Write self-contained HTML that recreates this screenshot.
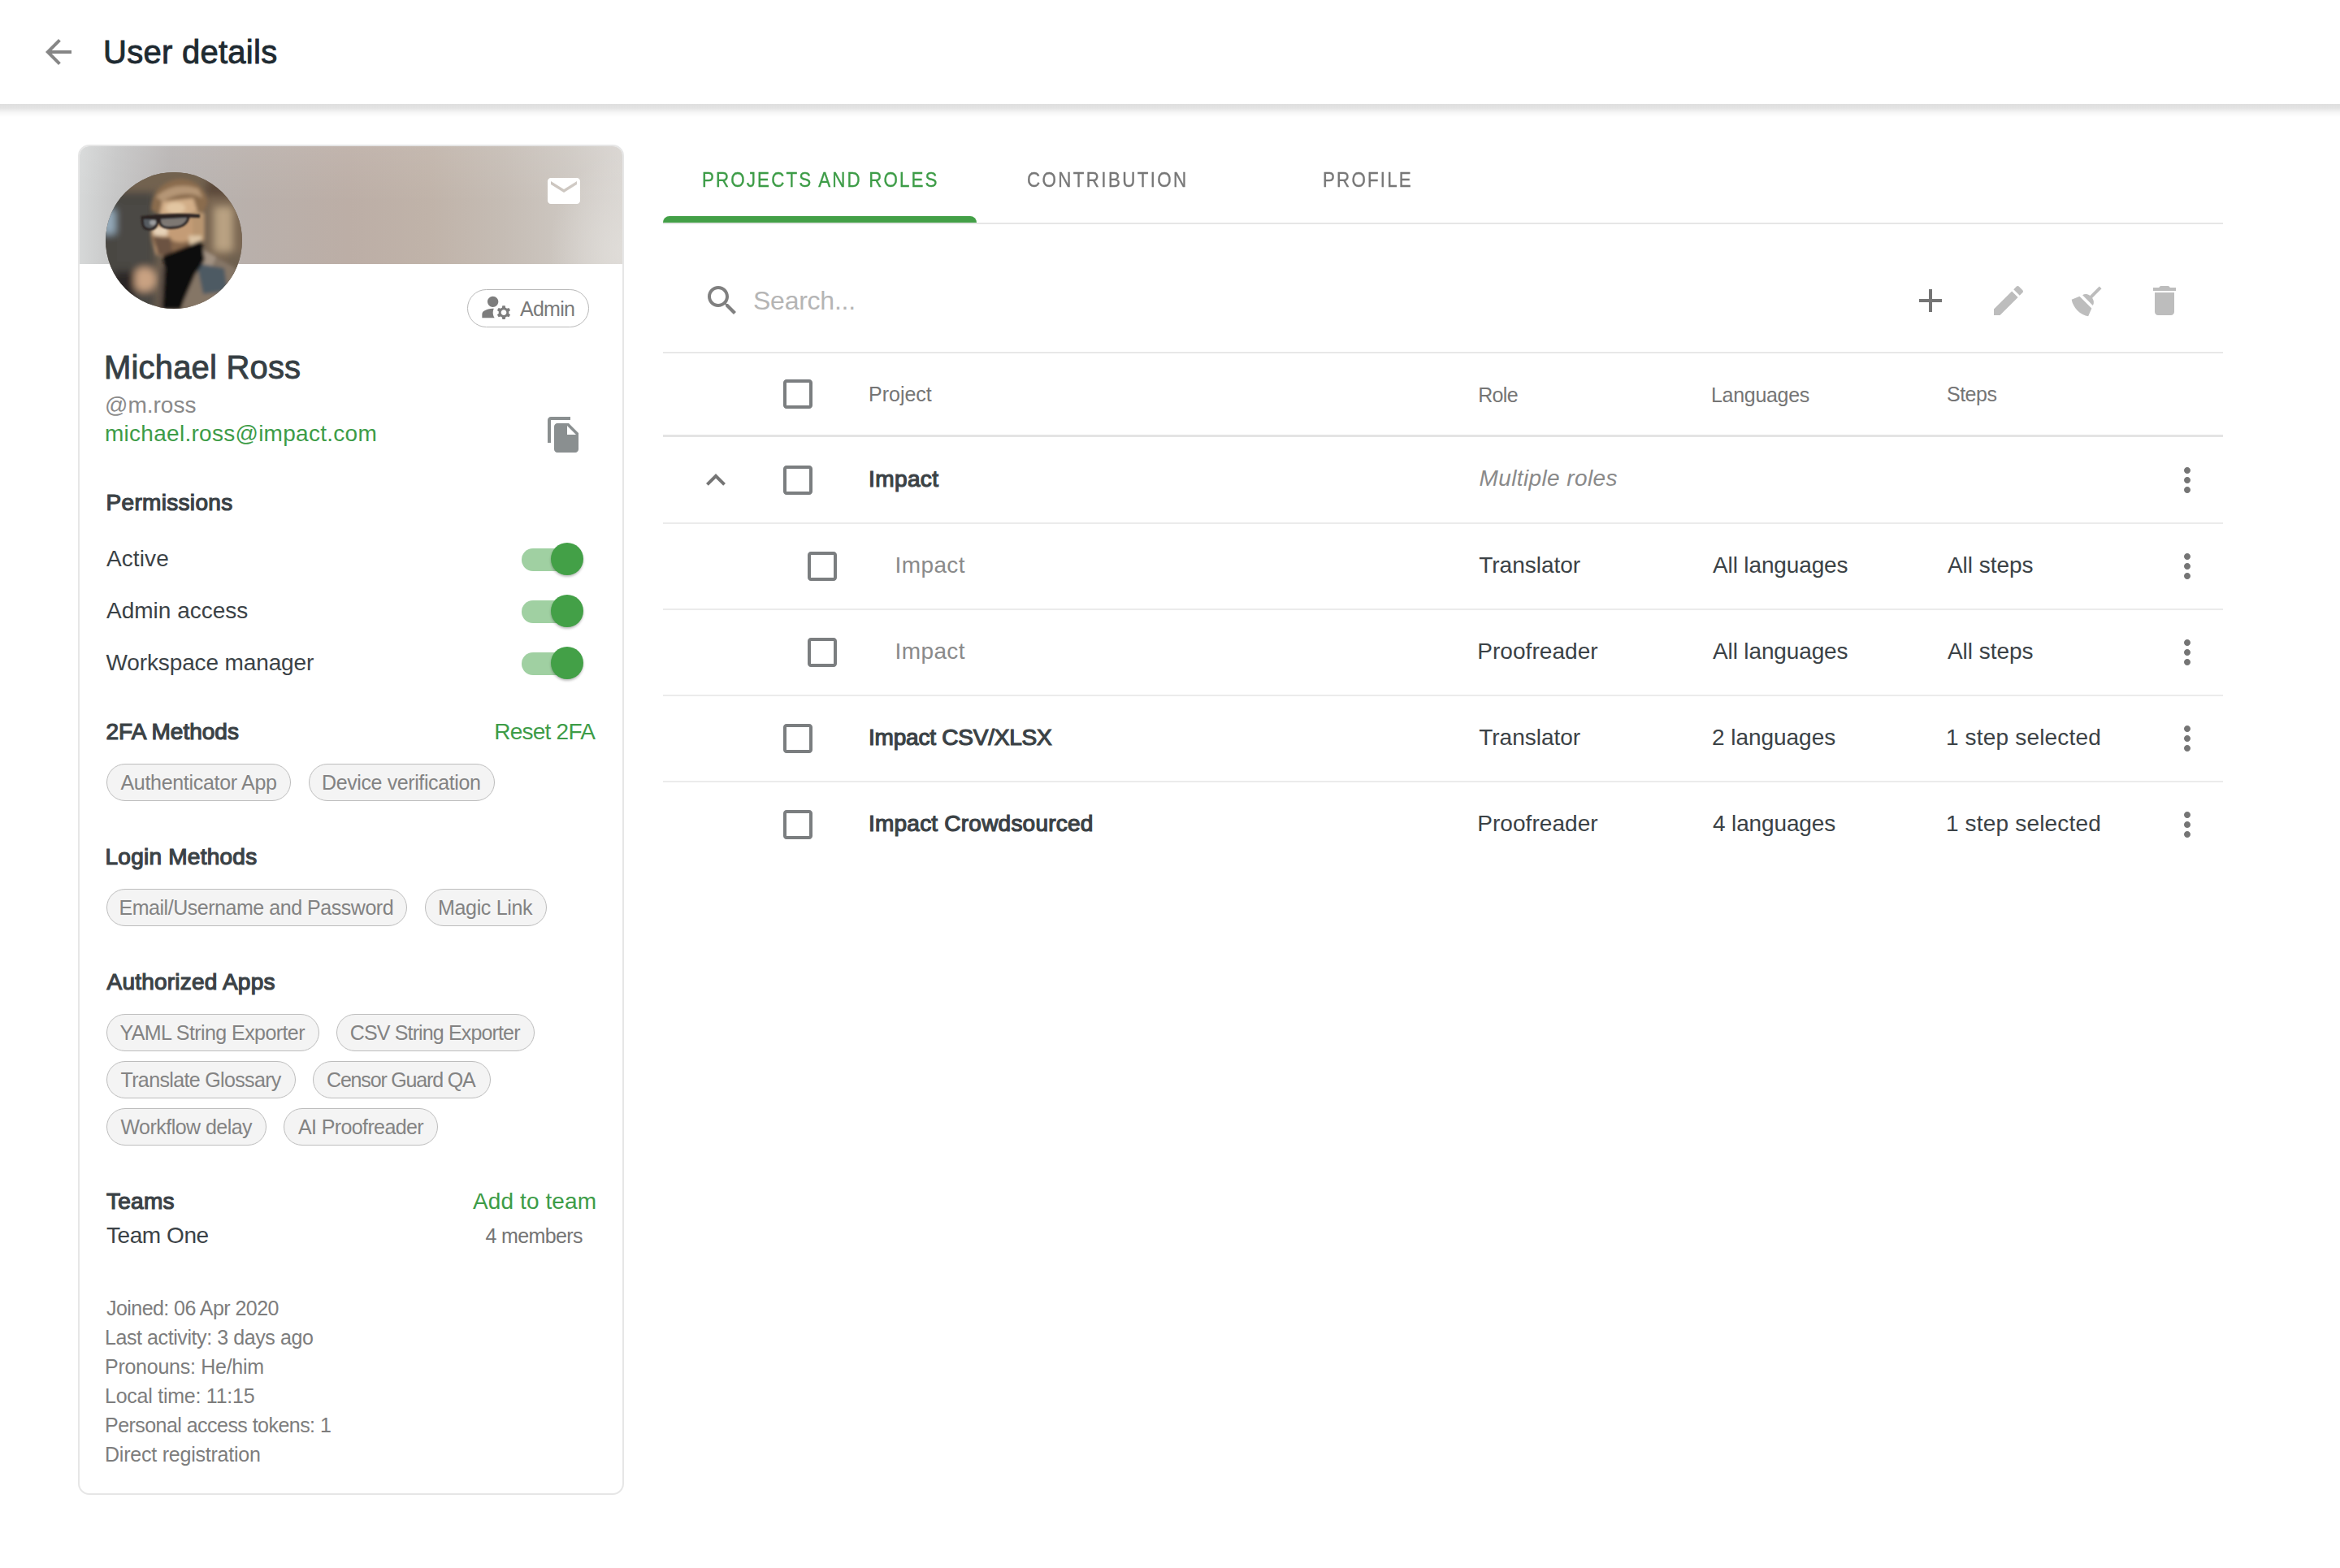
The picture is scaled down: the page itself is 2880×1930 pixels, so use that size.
<!DOCTYPE html>
<html><head><meta charset="utf-8">
<style>
html,body{margin:0;padding:0;background:#fff;}
body{width:2880px;height:1930px;position:relative;overflow:hidden;font-family:"Liberation Sans",sans-serif;}
.t{position:absolute;white-space:nowrap;line-height:1;z-index:3;}
.abs{position:absolute;}
.hdr{position:absolute;left:0;top:0;width:2880px;height:128px;background:#fff;z-index:2;}
.card{position:absolute;left:96px;top:178px;width:668px;height:1658px;border:2px solid #e6e6e6;border-radius:14px;overflow:hidden;background:#fff;}
.banner{position:absolute;left:0;top:0;width:668px;height:145px;
 background:
  linear-gradient(180deg, rgba(255,255,255,0.08) 0px, rgba(255,255,255,0) 70px),
  radial-gradient(ellipse 90px 120px at 668px 130px, rgba(224,221,217,0.9), rgba(224,221,217,0) 100%),
  linear-gradient(90deg,#d6d8d8 0px,#c6c6c6 45px,#b8b4b3 110px,#b9b0ab 210px,#bcaea6 330px,#c0b3a9 430px,#c5bcb4 520px,#cdc7c1 600px,#d8d4d0 668px);}
.chip{position:absolute;box-sizing:border-box;border:1.5px solid #bdbdbd;border-radius:24px;background:#f4f4f4;}
.div{position:absolute;left:816px;width:1920px;background:#e8e8e8;}
svg{position:absolute;overflow:visible;}
</style></head><body>
<div class="hdr">
 <svg style="left:48px;top:40px" width="48" height="48" viewBox="0 0 24 24"><path fill="#868686" d="M20 11H7.83l5.59-5.59L12 4l-8 8 8 8 1.41-1.41L7.83 13H20v-2z"/></svg>
</div>

<div class="abs" style="left:0;top:128px;width:2880px;height:16px;z-index:2;background:linear-gradient(180deg,rgba(0,0,0,0.13) 0px,rgba(0,0,0,0.11) 5px,rgba(0,0,0,0.04) 10px,rgba(0,0,0,0.01) 14px,rgba(0,0,0,0) 16px)"></div>
<div class="card">
 <div class="banner"></div>
</div>
<!-- avatar -->
<svg style="left:130px;top:212px" width="168" height="168" viewBox="0 0 168 168">
 <defs>
  <clipPath id="cc"><circle cx="84" cy="84" r="84"/></clipPath>
  <filter id="b6" x="-50%" y="-50%" width="200%" height="200%"><feGaussianBlur stdDeviation="5"/></filter>
  <filter id="b3" x="-50%" y="-50%" width="200%" height="200%"><feGaussianBlur stdDeviation="2"/></filter>
  <filter id="b1" x="-50%" y="-50%" width="200%" height="200%"><feGaussianBlur stdDeviation="0.8"/></filter>
 </defs>
 <g clip-path="url(#cc)">
  <rect width="168" height="168" fill="#6a5c4e"/>
  <g filter="url(#b6)">
   <rect x="-10" y="-10" width="190" height="34" fill="#726250"/>
   <rect x="-10" y="24" width="70" height="150" fill="#4a4643"/>
   <rect x="14" y="40" width="40" height="70" fill="#4c4844"/>
   <rect x="123" y="10" width="50" height="30" fill="#5c4a3a"/>
   <rect x="123" y="30" width="50" height="80" fill="#7c6852"/>
   <rect x="134" y="43" width="22" height="54" fill="#b9a282"/>
   <rect x="150" y="100" width="30" height="60" fill="#6e6050"/>
   <rect x="-4" y="46" width="16" height="30" fill="#96acbc"/>
   <ellipse cx="48" cy="132" rx="15" ry="15" fill="#c9a282"/>
   <rect x="10" y="122" width="26" height="40" fill="#2c2826"/>
  </g>
  <g filter="url(#b3)">
   <path d="M56 46 Q58 12 92 8 Q120 10 126 36 L122 48 L62 50 Z" fill="#8a6c4e"/>
   <path d="M62 30 Q84 10 114 20 L120 32 Q98 20 70 36 Z" fill="#b59676"/>
   <path d="M70 36 L108 32 L114 52 L66 54 Z" fill="#d2ae88"/>
   <ellipse cx="86" cy="44" rx="12" ry="7" fill="#e2c6a2"/>
   <path d="M56 58 L116 54 L120 84 L112 100 L90 106 L62 102 L56 80 Z" fill="#c49c76"/>
   <path d="M106 48 L122 50 L122 84 L108 86 Z" fill="#b8956f"/>
   <path d="M58 68 L76 66 L76 78 L60 78 Z" fill="#e6d2b8"/>
   <path d="M56 78 Q62 104 86 106 Q104 104 112 92 L110 80 Q96 90 82 84 L62 78 Z" fill="#86664c"/>
   <path d="M60 80 L80 80 L82 102 L64 102 Z" fill="#6c5242"/>
   <path d="M102 78 L118 78 L118 90 L104 92 Z" fill="#dcc4a4"/>
   <path d="M160 118 L118 94 L104 130 L94 168 L168 168 Z" fill="#857666"/>
   <path d="M118 94 L136 104 L130 118 L114 112 Z" fill="#a29282"/>
   <path d="M112 112 L146 118 L150 146 L120 150 Z" fill="#4e5a64"/>
   <path d="M64 168 L68 118 L78 112 L88 168 Z" fill="#5a4e44"/>
   <path d="M70 168 L73 118 L70 103 L118 84 L122 108 L110 126 L92 168 Z" fill="#0e0c0b"/>
  </g>
  <g filter="url(#b1)">
   <path d="M44 54 Q80 49 116 52 L116 56 Q80 54 46 58 Z" fill="#2a2320"/>
   <path d="M45 56 L46 65 Q48 71 56 70 Q64 69 64 57 Z" fill="#59626b" fill-opacity="0.75" stroke="#2a2320" stroke-width="3"/>
   <path d="M66 56 L67 63 Q70 70 86 68 Q101 66 102 54 Z" fill="#616a72" fill-opacity="0.7" stroke="#2a2320" stroke-width="3"/>
   <ellipse cx="58" cy="62" rx="4" ry="3" fill="#c8ccd0" fill-opacity="0.5"/>
  </g>
 </g>
</svg>
<!-- mail icon -->
<svg style="left:670px;top:211px" width="48" height="48" viewBox="0 0 24 24"><path fill="#ffffff" d="M20 4H4c-1.1 0-1.99.9-1.99 2L2 18c0 1.1.9 2 2 2h16c1.1 0 2-.9 2-2V6c0-1.1-.9-2-2-2zm0 4l-8 5-8-5V6l8 5 8-5v2z"/></svg>
<!-- admin chip -->
<div class="abs" style="left:575px;top:356px;width:150px;height:47px;box-sizing:border-box;border:1.5px solid #b8b8b8;border-radius:24px;"></div>
<svg style="left:589.7px;top:358.3px" width="40" height="40" viewBox="0 0 24 24"><path fill="#7d7d7d" d="M10.67 13.02c-.22-.01-.44-.02-.67-.02-2.42 0-4.68.67-6.61 1.82-.88.52-1.39 1.5-1.39 2.53V20h9.26c-.79-1.130-1.26-2.51-1.26-4 0-1.07.25-2.07.67-2.98zM10 12c2.21 0 4-1.79 4-4s-1.79-4-4-4-4 1.79-4 4 1.79 4 4 4zm11.75 4c0-.22-.03-.42-.06-.63l1.14-1.01-1-1.73-1.45.49c-.32-.27-.68-.48-1.08-.63L19 11h-2l-.3 1.490c-.4.15-.76.36-1.08.63l-1.45-.49-1 1.73 1.14 1.01c-.03.21-.06.41-.06.63s.03.42.06.63l-1.14 1.01 1 1.73 1.45-.49c.32.27.68.48 1.08.63L17 21h2l.3-1.49c.4-.15.76-.36 1.08-.63l1.45.49 1-1.730-1.14-1.01c.03-.21.06-.41.06-.63zM18 18c-1.1 0-2-.9-2-2s.9-2 2-2 2 .9 2 2-.9 2-2 2z"/></svg>
<!-- copy icon -->
<svg style="left:670px;top:511px" width="48" height="48" viewBox="0 0 24 24"><path fill="#8a8f90" d="M16 1H4c-1.1 0-2 .9-2 2v14h2V3h12V1zm-1 4l6 6v10c0 1.1-.9 2-2 2H7.99C6.89 23 6 22.1 6 21l.01-14c0-1.1.89-2 1.99-2h7zm-1 7h5.5L14 6.5V12z"/></svg>
<!-- toggles -->
<div class="abs" style="left:642px;top:675px;width:68px;height:28px;border-radius:14px;background:#a0d0a2"></div>
<div class="abs" style="left:678px;top:668px;width:40px;height:40px;border-radius:20px;background:#43a047;box-shadow:0 2px 3px rgba(0,0,0,0.25)"></div>
<div class="abs" style="left:642px;top:739px;width:68px;height:28px;border-radius:14px;background:#a0d0a2"></div>
<div class="abs" style="left:678px;top:732px;width:40px;height:40px;border-radius:20px;background:#43a047;box-shadow:0 2px 3px rgba(0,0,0,0.25)"></div>
<div class="abs" style="left:642px;top:803px;width:68px;height:28px;border-radius:14px;background:#a0d0a2"></div>
<div class="abs" style="left:678px;top:796px;width:40px;height:40px;border-radius:20px;background:#43a047;box-shadow:0 2px 3px rgba(0,0,0,0.25)"></div>

<div class="chip" style="left:130.5px;top:940.0px;width:227.5px;height:46.0px"></div>
<div class="t" id="chip0" style="left:148.50px;top:951.34px;font-size:25px;color:#838383;letter-spacing:-0.312px">Authenticator App</div>
<div class="chip" style="left:380.0px;top:940.0px;width:229.0px;height:46.0px"></div>
<div class="t" id="chip1" style="left:396.00px;top:951.34px;font-size:25px;color:#838383;letter-spacing:-0.389px">Device verification</div>
<div class="chip" style="left:130.5px;top:1094.0px;width:370.5px;height:46.0px"></div>
<div class="t" id="chip2" style="left:146.50px;top:1105.34px;font-size:25px;color:#838383;letter-spacing:-0.462px">Email/Username and Password</div>
<div class="chip" style="left:523.0px;top:1094.0px;width:150.0px;height:46.0px"></div>
<div class="t" id="chip3" style="left:539.00px;top:1105.34px;font-size:25px;color:#838383;letter-spacing:-0.333px">Magic Link</div>
<div class="chip" style="left:130.5px;top:1248.0px;width:262.5px;height:46.0px"></div>
<div class="t" id="chip4" style="left:147.50px;top:1259.34px;font-size:25px;color:#838383;letter-spacing:-0.579px">YAML String Exporter</div>
<div class="chip" style="left:414.4px;top:1248.0px;width:244.1px;height:46.0px"></div>
<div class="t" id="chip5" style="left:430.80px;top:1259.34px;font-size:25px;color:#838383;letter-spacing:-0.856px">CSV String Exporter</div>
<div class="chip" style="left:130.5px;top:1306.0px;width:233.5px;height:46.0px"></div>
<div class="t" id="chip6" style="left:148.50px;top:1317.34px;font-size:25px;color:#838383;letter-spacing:-0.647px">Translate Glossary</div>
<div class="chip" style="left:385.0px;top:1306.0px;width:218.6px;height:46.0px"></div>
<div class="t" id="chip7" style="left:402.00px;top:1317.34px;font-size:25px;color:#838383;letter-spacing:-1.171px">Censor Guard QA</div>
<div class="chip" style="left:130.5px;top:1364.0px;width:197.5px;height:46.0px"></div>
<div class="t" id="chip8" style="left:148.50px;top:1375.34px;font-size:25px;color:#838383;letter-spacing:-0.538px">Workflow delay</div>
<div class="chip" style="left:349.0px;top:1364.0px;width:190.0px;height:46.0px"></div>
<div class="t" id="chip9" style="left:367.00px;top:1375.34px;font-size:25px;color:#838383;letter-spacing:-0.615px">AI Proofreader</div>

<!-- tabs -->
<div class="div" style="top:274px;height:2px;background:#e6e6e6"></div>
<div class="abs" style="left:816px;top:266px;width:386px;height:8px;background:#43a047;border-radius:8px 8px 0 0"></div>
<!-- search -->
<svg style="left:864.5px;top:346px" width="48" height="48" viewBox="0 0 24 24"><path fill="#808080" d="M15.5 14h-.79l-.28-.27C15.41 12.590 16 11.11 16 9.5 16 5.91 13.09 3 9.5 3S3 5.91 3 9.5 5.91 16 9.5 16c1.61 0 3.09-.59 4.23-1.57l.27.28v.79l5 4.99L20.49 19l-4.99-5zm-6 0C7.01 14 5 11.99 5 9.5S7.01 5 9.5 5 14 7.01 14 9.5 11.99 14 9.5 14z"/></svg>
<svg style="left:2352px;top:346px" width="48" height="48" viewBox="0 0 24 24"><path fill="#757575" d="M19 13h-6v6h-2v-6H5v-2h6V5h2v6h6v2z"/></svg>
<svg style="left:2448px;top:346px" width="48" height="48" viewBox="0 0 24 24"><path fill="#bdbdbd" d="M3 17.25V21h3.75L17.81 9.94l-3.75-3.75L3 17.25zM20.71 7.04c.39-.39.39-1.02 0-1.41l-2.34-2.34c-.39-.39-1.02-.39-1.41 0l-1.83 1.83 3.75 3.75 1.83-1.830z"/></svg>
<svg style="left:2545px;top:346.5px" width="48" height="48" viewBox="0 0 24 24"><path fill="#bdbdbd" d="M19.36,2.72L20.78,4.14L15.06,9.85C16.13,11.39 16.28,13.24 15.38,14.44L9.06,8.12C10.26,7.22 12.11,7.37 13.65,8.44L19.36,2.72M5.93,17.57C3.92,15.56 2.69,13.16 2.35,10.92L7.230,8.83L14.67,16.27L12.58,21.15C10.34,20.81 7.94,19.58 5.93,17.57Z"/></svg>
<svg style="left:2640px;top:346px" width="48" height="48" viewBox="0 0 24 24"><path fill="#bdbdbd" d="M6 19c0 1.1.9 2 2 2h8c1.1 0 2-.9 2-2V7H6v12zM19 4h-3.5l-1-1h-5l-1 1H5v2h14V4z"/></svg>
<div class="div" style="top:433px;height:2px"></div>
<!-- table -->
<div class="div" style="top:535px;height:3px;background:#e4e4e4"></div>
<div class="div" style="top:643px;height:2px;background:#ebebeb"></div>
<div class="div" style="top:749px;height:2px;background:#ebebeb"></div>
<div class="div" style="top:855px;height:2px;background:#ebebeb"></div>
<div class="div" style="top:961px;height:2px;background:#ebebeb"></div>
<svg style="left:958px;top:461px" width="48" height="48" viewBox="0 0 24 24"><path fill="#7b7e80" d="M19 5v14H5V5h14m0-2H5c-1.1 0-2 .9-2 2v14c0 1.1.9 2 2 2h14c1.1 0 2-.9 2-2V5c0-1.1-.9-2-2-2z"/></svg>
<svg style="left:958px;top:567px" width="48" height="48" viewBox="0 0 24 24"><path fill="#7b7e80" d="M19 5v14H5V5h14m0-2H5c-1.1 0-2 .9-2 2v14c0 1.1.9 2 2 2h14c1.1 0 2-.9 2-2V5c0-1.1-.9-2-2-2z"/></svg>
<svg style="left:988px;top:673px" width="48" height="48" viewBox="0 0 24 24"><path fill="#7b7e80" d="M19 5v14H5V5h14m0-2H5c-1.1 0-2 .9-2 2v14c0 1.1.9 2 2 2h14c1.1 0 2-.9 2-2V5c0-1.1-.9-2-2-2z"/></svg>
<svg style="left:988px;top:779px" width="48" height="48" viewBox="0 0 24 24"><path fill="#7b7e80" d="M19 5v14H5V5h14m0-2H5c-1.1 0-2 .9-2 2v14c0 1.1.9 2 2 2h14c1.1 0 2-.9 2-2V5c0-1.1-.9-2-2-2z"/></svg>
<svg style="left:958px;top:885px" width="48" height="48" viewBox="0 0 24 24"><path fill="#7b7e80" d="M19 5v14H5V5h14m0-2H5c-1.1 0-2 .9-2 2v14c0 1.1.9 2 2 2h14c1.1 0 2-.9 2-2V5c0-1.1-.9-2-2-2z"/></svg>
<svg style="left:958px;top:991px" width="48" height="48" viewBox="0 0 24 24"><path fill="#7b7e80" d="M19 5v14H5V5h14m0-2H5c-1.1 0-2 .9-2 2v14c0 1.1.9 2 2 2h14c1.1 0 2-.9 2-2V5c0-1.1-.9-2-2-2z"/></svg>
<svg style="left:2668px;top:567px" width="48" height="48" viewBox="0 0 24 24"><path fill="#757575" d="M12 8c1.1 0 2-.9 2-2s-.9-2-2-2-2 .9-2 2 .9 2 2 2zm0 2c-1.1 0-2 .9-2 2s.9 2 2 2 2-.9 2-2-.9-2-2-2zm0 6c-1.1 0-2 .9-2 2s.9 2 2 2 2-.9 2-2-.9-2-2-2z"/></svg>
<svg style="left:2668px;top:673px" width="48" height="48" viewBox="0 0 24 24"><path fill="#757575" d="M12 8c1.1 0 2-.9 2-2s-.9-2-2-2-2 .9-2 2 .9 2 2 2zm0 2c-1.1 0-2 .9-2 2s.9 2 2 2 2-.9 2-2-.9-2-2-2zm0 6c-1.1 0-2 .9-2 2s.9 2 2 2 2-.9 2-2-.9-2-2-2z"/></svg>
<svg style="left:2668px;top:779px" width="48" height="48" viewBox="0 0 24 24"><path fill="#757575" d="M12 8c1.1 0 2-.9 2-2s-.9-2-2-2-2 .9-2 2 .9 2 2 2zm0 2c-1.1 0-2 .9-2 2s.9 2 2 2 2-.9 2-2-.9-2-2-2zm0 6c-1.1 0-2 .9-2 2s.9 2 2 2 2-.9 2-2-.9-2-2-2z"/></svg>
<svg style="left:2668px;top:885px" width="48" height="48" viewBox="0 0 24 24"><path fill="#757575" d="M12 8c1.1 0 2-.9 2-2s-.9-2-2-2-2 .9-2 2 .9 2 2 2zm0 2c-1.1 0-2 .9-2 2s.9 2 2 2 2-.9 2-2-.9-2-2-2zm0 6c-1.1 0-2 .9-2 2s.9 2 2 2 2-.9 2-2-.9-2-2-2z"/></svg>
<svg style="left:2668px;top:991px" width="48" height="48" viewBox="0 0 24 24"><path fill="#757575" d="M12 8c1.1 0 2-.9 2-2s-.9-2-2-2-2 .9-2 2 .9 2 2 2zm0 2c-1.1 0-2 .9-2 2s.9 2 2 2 2-.9 2-2-.9-2-2-2zm0 6c-1.1 0-2 .9-2 2s.9 2 2 2 2-.9 2-2-.9-2-2-2z"/></svg>
<svg style="left:856.5px;top:566.6px" width="48" height="48" viewBox="0 0 24 24"><path fill="#757575" d="M12 8l-6 6 1.41 1.41L12 10.83l4.59 4.58L18 14z"/></svg>
<div class="t" id="title" style="left:127.00px;top:44.14px;font-size:40px;font-weight:400;color:#1e2a31;letter-spacing:0.273px;-webkit-text-stroke:0.88px #1e2a31;">User details</div>
<div class="t" id="name" style="left:128.00px;top:432.44px;font-size:40px;font-weight:400;color:#363f44;letter-spacing:0.182px;-webkit-text-stroke:0.88px #363f44;">Michael Ross</div>
<div class="t" id="handle" style="left:129.00px;top:484.70px;font-size:28px;font-weight:400;color:#8a8a8a;letter-spacing:0.000px;">@m.ross</div>
<div class="t" id="email" style="left:129.00px;top:519.70px;font-size:28px;font-weight:400;color:#3d9c47;letter-spacing:0.273px;">michael.ross@impact.com</div>
<div class="t" id="adminchip" style="left:640.00px;top:368.44px;font-size:25px;font-weight:400;color:#7a7a7a;letter-spacing:-0.750px;">Admin</div>
<div class="t" id="perm" style="left:130.50px;top:605.10px;font-size:28px;font-weight:400;color:#3b4246;letter-spacing:0.320px;-webkit-text-stroke:1.20px #3b4246;">Permissions</div>
<div class="t" id="active" style="left:130.90px;top:674.30px;font-size:28px;font-weight:400;color:#3b4246;letter-spacing:0.120px;">Active</div>
<div class="t" id="adminacc" style="left:131.00px;top:738.30px;font-size:28px;font-weight:400;color:#3b4246;letter-spacing:0.000px;">Admin access</div>
<div class="t" id="wsm" style="left:130.50px;top:802.30px;font-size:28px;font-weight:400;color:#3b4246;letter-spacing:-0.125px;">Workspace manager</div>
<div class="t" id="2fa" style="left:130.50px;top:887.30px;font-size:28px;font-weight:400;color:#3b4246;letter-spacing:0.000px;-webkit-text-stroke:1.20px #3b4246;">2FA Methods</div>
<div class="t" id="reset" style="left:608.20px;top:887.30px;font-size:28px;font-weight:400;color:#3d9c47;letter-spacing:-0.750px;">Reset 2FA</div>
<div class="t" id="login" style="left:129.50px;top:1041.30px;font-size:28px;font-weight:400;color:#3b4246;letter-spacing:0.250px;-webkit-text-stroke:1.20px #3b4246;">Login Methods</div>
<div class="t" id="apps" style="left:131.50px;top:1195.30px;font-size:28px;font-weight:400;color:#3b4246;letter-spacing:0.214px;-webkit-text-stroke:1.20px #3b4246;">Authorized Apps</div>
<div class="t" id="teams" style="left:131.00px;top:1465.30px;font-size:28px;font-weight:400;color:#3b4246;letter-spacing:0.250px;-webkit-text-stroke:1.20px #3b4246;">Teams</div>
<div class="t" id="addteam" style="left:582.00px;top:1465.30px;font-size:28px;font-weight:400;color:#3d9c47;letter-spacing:0.100px;">Add to team</div>
<div class="t" id="teamone" style="left:131.00px;top:1506.90px;font-size:28px;font-weight:400;color:#3b4246;letter-spacing:-0.429px;">Team One</div>
<div class="t" id="members" style="left:597.50px;top:1509.44px;font-size:25px;font-weight:400;color:#757575;letter-spacing:-0.625px;">4 members</div>
<div class="t" id="foot0" style="left:131.00px;top:1597.84px;font-size:25px;font-weight:400;color:#7d7d7d;letter-spacing:-0.556px;">Joined: 06 Apr 2020</div>
<div class="t" id="foot1" style="left:129.00px;top:1633.84px;font-size:25px;font-weight:400;color:#7d7d7d;letter-spacing:-0.417px;">Last activity: 3 days ago</div>
<div class="t" id="foot2" style="left:129.00px;top:1669.84px;font-size:25px;font-weight:400;color:#7d7d7d;letter-spacing:-0.267px;">Pronouns: He/him</div>
<div class="t" id="foot3" style="left:129.00px;top:1705.84px;font-size:25px;font-weight:400;color:#7d7d7d;letter-spacing:-0.250px;">Local time: 11:15</div>
<div class="t" id="foot4" style="left:129.00px;top:1741.84px;font-size:25px;font-weight:400;color:#7d7d7d;letter-spacing:-0.542px;">Personal access tokens: 1</div>
<div class="t" id="foot5" style="left:129.00px;top:1777.84px;font-size:25px;font-weight:400;color:#7d7d7d;letter-spacing:-0.222px;">Direct registration</div>
<div class="t" id="tab1" style="left:864.00px;top:207.99px;font-size:26px;font-weight:400;color:#3d9c47;letter-spacing:2.462px;-webkit-text-stroke:0.35px #3d9c47;transform:scaleX(0.860);transform-origin:0 0;">PROJECTS AND ROLES</div>
<div class="t" id="tab2" style="left:1264.00px;top:207.99px;font-size:26px;font-weight:400;color:#777;letter-spacing:2.748px;-webkit-text-stroke:0.35px #777;transform:scaleX(0.860);transform-origin:0 0;">CONTRIBUTION</div>
<div class="t" id="tab3" style="left:1628.00px;top:207.99px;font-size:26px;font-weight:400;color:#777;letter-spacing:2.519px;-webkit-text-stroke:0.35px #777;transform:scaleX(0.860);transform-origin:0 0;">PROFILE</div>
<div class="t" id="search" style="left:927.00px;top:353.91px;font-size:32px;font-weight:400;color:#b5b5b5;letter-spacing:-0.250px;">Search...</div>
<div class="t" id="hproj" style="left:1069.00px;top:473.44px;font-size:25px;font-weight:400;color:#757575;letter-spacing:0.000px;">Project</div>
<div class="t" id="hrole" style="left:1819.20px;top:473.54px;font-size:25px;font-weight:400;color:#757575;letter-spacing:-0.667px;">Role</div>
<div class="t" id="hlang" style="left:2106.00px;top:473.54px;font-size:25px;font-weight:400;color:#757575;letter-spacing:-0.300px;">Languages</div>
<div class="t" id="hsteps" style="left:2396.00px;top:472.84px;font-size:25px;font-weight:400;color:#757575;letter-spacing:-0.500px;">Steps</div>
<div class="t" id="r1p" style="left:1069.00px;top:576.30px;font-size:28px;font-weight:400;color:#3b4246;letter-spacing:0.400px;-webkit-text-stroke:1.20px #3b4246;">Impact</div>
<div class="t" id="r1r" style="left:1820.50px;top:575.30px;font-size:28px;font-weight:400;color:#8a8a8a;letter-spacing:0.385px;font-style:italic;">Multiple roles</div>
<div class="t" id="r2p" style="left:1101.50px;top:682.30px;font-size:28px;font-weight:400;color:#8a8a8a;letter-spacing:0.400px;">Impact</div>
<div class="t" id="r2r" style="left:1820.20px;top:682.30px;font-size:28px;font-weight:400;color:#3b4246;letter-spacing:0.000px;">Translator</div>
<div class="t" id="r2l" style="left:2108.00px;top:682.30px;font-size:28px;font-weight:400;color:#3b4246;letter-spacing:-0.133px;">All languages</div>
<div class="t" id="r2s" style="left:2396.90px;top:682.30px;font-size:28px;font-weight:400;color:#3b4246;letter-spacing:-0.025px;">All steps</div>
<div class="t" id="r3p" style="left:1101.50px;top:788.30px;font-size:28px;font-weight:400;color:#8a8a8a;letter-spacing:0.400px;">Impact</div>
<div class="t" id="r3r" style="left:1818.20px;top:788.30px;font-size:28px;font-weight:400;color:#3b4246;letter-spacing:0.060px;">Proofreader</div>
<div class="t" id="r3l" style="left:2108.00px;top:788.30px;font-size:28px;font-weight:400;color:#3b4246;letter-spacing:-0.133px;">All languages</div>
<div class="t" id="r3s" style="left:2396.90px;top:788.30px;font-size:28px;font-weight:400;color:#3b4246;letter-spacing:-0.025px;">All steps</div>
<div class="t" id="r4p" style="left:1069.00px;top:893.80px;font-size:28px;font-weight:400;color:#3b4246;letter-spacing:-0.214px;-webkit-text-stroke:1.20px #3b4246;">Impact CSV/XLSX</div>
<div class="t" id="r4r" style="left:1820.20px;top:893.80px;font-size:28px;font-weight:400;color:#3b4246;letter-spacing:0.000px;">Translator</div>
<div class="t" id="r4l" style="left:2107.00px;top:893.80px;font-size:28px;font-weight:400;color:#3b4246;letter-spacing:-0.040px;">2 languages</div>
<div class="t" id="r4s" style="left:2394.90px;top:893.80px;font-size:28px;font-weight:400;color:#3b4246;letter-spacing:0.186px;">1 step selected</div>
<div class="t" id="r5p" style="left:1069.00px;top:999.80px;font-size:28px;font-weight:400;color:#3b4246;letter-spacing:0.222px;-webkit-text-stroke:1.20px #3b4246;">Impact Crowdsourced</div>
<div class="t" id="r5r" style="left:1818.20px;top:999.80px;font-size:28px;font-weight:400;color:#3b4246;letter-spacing:0.060px;">Proofreader</div>
<div class="t" id="r5l" style="left:2108.00px;top:999.80px;font-size:28px;font-weight:400;color:#3b4246;letter-spacing:-0.140px;">4 languages</div>
<div class="t" id="r5s" style="left:2394.90px;top:999.80px;font-size:28px;font-weight:400;color:#3b4246;letter-spacing:0.186px;">1 step selected</div>
</body></html>
